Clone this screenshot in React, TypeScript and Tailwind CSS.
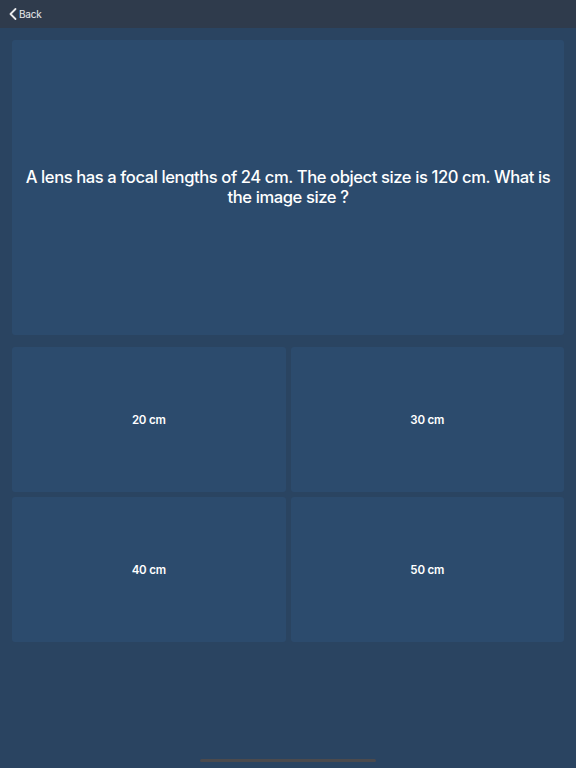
import { ChevronLeft } from "lucide-react";

const answers = ["20 cm", "30 cm", "40 cm", "50 cm"];

export default function App() {
  return (
    <div
      className="relative h-[768px] w-[576px] overflow-hidden bg-[#2a4461] text-white"
      style={{ fontFamily: "Inter, 'Noto Sans', sans-serif" }}
    >
      {/* Nav bar */}
      <div className="flex h-7 items-center bg-[#2f3b4c] pl-[3px]">
        <button className="flex items-center text-[10px] text-white/90">
          <ChevronLeft className="h-[20px] w-[20px]" strokeWidth={2.2} />
          <span className="-ml-[4px] tracking-[-0.2px]">Back</span>
        </button>
      </div>

      <div className="px-3 pt-3">
        {/* Question */}
        <div className="flex h-[295px] items-center justify-center rounded-[3px] bg-[#2c4b6d] px-3 pb-[2px] text-center">
          <p className="text-[16.6px] font-medium leading-[20px] tracking-[-0.42px]">
            A lens has a focal lengths of 24 cm. The object size is 120 cm. What is the image size ?
          </p>
        </div>

        {/* Answers */}
        <div className="mt-3 grid grid-cols-2 gap-x-[5px] gap-y-[5px]">
          {answers.map((a) => (
            <button
              key={a}
              className="flex h-[145px] items-center justify-center rounded-[3px] bg-[#2c4b6d] pt-[2px] text-[11.5px] font-semibold tracking-[-0.2px]"
            >
              {a}
            </button>
          ))}
        </div>
      </div>

      {/* Home indicator */}
      <div className="absolute bottom-[6px] left-[200px] h-[3px] w-[176px] rounded-full bg-[#4b4a4d]" />
    </div>
  );
}
